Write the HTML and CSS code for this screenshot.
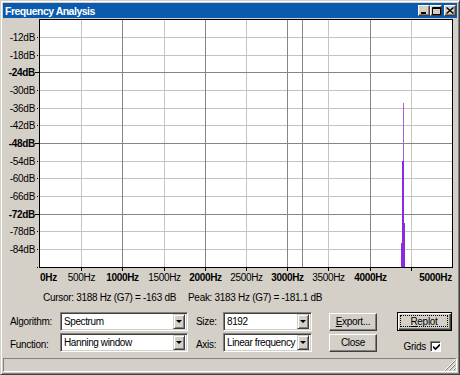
FILE: index.html
```html
<!DOCTYPE html>
<html lang="en">
<head>
    <meta charset="UTF-8">
    <title>Frequency Analysis</title>
    <link rel="stylesheet" href="styles.css">
</head>
<body>
    <div class="window">
        <!-- Barra de titulo -->
        <div class="titlebar">
            <span class="title">Frequency Analysis</span>
            <div class="tb-buttons">
                <span class="tb-btn"><svg width="8" height="7"><rect x="1" y="5" width="5" height="2" fill="#000"/></svg></span>
                <span class="tb-btn"><svg width="9" height="8"><path d="M0.5 0.5H8.5V7.5H0.5Z" fill="none" stroke="#000"/><rect x="0" y="1" width="9" height="1" fill="#000"/></svg></span>
                <span class="tb-btn close"><svg width="8" height="7"><path d="M0.5 0.5L7.5 6.5M7.5 0.5L0.5 6.5" stroke="#000" stroke-width="1.4"/></svg></span>
            </div>
        </div>

        <!-- Grafico -->
        <svg class="plot" width="454" height="270" viewBox="3 18 454 270">
            <rect x="39.5" y="19.5" width="413" height="248" fill="#fff"/>
            <path class="minor" d="M40 37.5H452M40 55.5H452M40 90.5H452M40 108.5H452M40 125.5H452M40 161.5H452M40 178.5H452M40 196.5H452M40 231.5H452M40 249.5H452"/>
            <path class="minor" d="M81.5 20V267M164.5 20V267M246.5 20V267M328.5 20V267M411.5 20V267"/>
            <path class="major" d="M40 72.5H452M40 143.5H452M40 214.5H452"/>
            <path class="major" d="M122.5 20V267M205.5 20V267M287.5 20V267M370.5 20V267M302.5 20V267"/>
            <rect x="403" y="103" width="1" height="164" fill="#a55fe0"/>
            <rect x="402" y="161" width="2" height="106" fill="#8a2be2"/>
            <rect x="403" y="223" width="2" height="44" fill="#8a2be2"/>
            <rect x="401" y="243" width="3" height="24" fill="#8a2be2"/>
            <rect x="39.5" y="19.5" width="413" height="248" fill="none" stroke="#000"/>

            <path class="tick" d="M37 37.5H38M37 55.5H38M37 90.5H38M37 108.5H38M37 125.5H38M37 161.5H38M37 178.5H38M37 196.5H38M37 231.5H38M37 249.5H38M37 267.5H38"/>
            <path class="tick" d="M35 72.5H39M35 143.5H39M35 214.5H39"/>
            <path class="tick" d="M81.5 268V271M122.5 268V271M164.5 268V271M205.5 268V271M246.5 268V271M287.5 268V271M328.5 268V271M370.5 268V271M411.5 268V271"/>

            <text x="35" y="40.6" class="yl">-12dB</text>
            <text x="35" y="58.6" class="yl">-18dB</text>
            <text x="35" y="75.6" class="yl b">-24dB</text>
            <text x="35" y="93.6" class="yl">-30dB</text>
            <text x="35" y="111.6" class="yl">-36dB</text>
            <text x="35" y="128.6" class="yl">-42dB</text>
            <text x="35" y="146.6" class="yl b">-48dB</text>
            <text x="35" y="164.6" class="yl">-54dB</text>
            <text x="35" y="181.6" class="yl">-60dB</text>
            <text x="35" y="199.6" class="yl">-66dB</text>
            <text x="35" y="217.6" class="yl b">-72dB</text>
            <text x="35" y="234.6" class="yl">-78dB</text>
            <text x="35" y="252.6" class="yl">-84dB</text>

            <text x="40" y="281" class="b">0Hz</text>
            <text x="81.5" y="281" class="xl">500Hz</text>
            <text x="122.5" y="281" class="xl b">1000Hz</text>
            <text x="164.5" y="281" class="xl">1500Hz</text>
            <text x="205.5" y="281" class="xl b">2000Hz</text>
            <text x="246.5" y="281" class="xl">2500Hz</text>
            <text x="287.5" y="281" class="xl b">3000Hz</text>
            <text x="328.5" y="281" class="xl">3500Hz</text>
            <text x="370.5" y="281" class="xl b">4000Hz</text>
            <text x="452" y="281" class="yl b">5000Hz</text>
        </svg>

        <div class="info">
            <span class="cursor">Cursor: 3188 Hz (G7) = -163 dB</span>
            <span>Peak: 3183 Hz (G7) = -181.1 dB</span>
        </div>

        <!-- Controles -->
        <div class="controls">
            <span class="lbl">Algorithm:</span>
            <div class="combo"><span class="val">Spectrum</span><i class="drop"></i></div>
            <span class="lbl lbl2">Size:</span>
            <div class="combo"><span class="val">8192</span><i class="drop"></i></div>
            <button class="btn"><u>E</u>xport...</button>
            <button class="btn default"><span class="focus"><u>R</u>eplot</span></button>

            <span class="lbl low">Function:</span>
            <div class="combo"><span class="val">Hanning window</span><i class="drop"></i></div>
            <span class="lbl lbl2 low">Axis:</span>
            <div class="combo"><span class="val">Linear frequency</span><i class="drop"></i></div>
            <button class="btn">Close</button>
            <div class="grids">
                <span>Grids</span>
                <span class="check"><svg width="7" height="7"><path d="M0 2.5L2.5 5L7 0.5" fill="none" stroke="#000" stroke-width="1.6"/></svg></span>
            </div>
        </div>

        <div class="status">
            <svg class="grip" width="12" height="12"><path d="M11.5 1.5L1.5 11.5M11.5 5.5L5.5 11.5M11.5 9.5L9.5 11.5" stroke="#808080"/><path d="M11.5 0.5L0.5 11.5M11.5 4.5L4.5 11.5M11.5 8.5L8.5 11.5" stroke="#fff"/></svg>
        </div>
    </div>
</body>
</html>
```

FILE: styles.css
```css
* {
    box-sizing: border-box;
}
body {
    margin: 0;
    background: #d4d0c8;
    font-family: "Liberation Sans", Arial, sans-serif;
    font-size: 10px;
    letter-spacing: -0.3px;
    color: #000;
}
.window {
    width: 460px;
    height: 375px;
    border: 1px solid;
    border-color: #d4d0c8 #404040 #404040 #d4d0c8;
    box-shadow: inset 1px 1px #fff, inset -1px -1px #808080;
    padding: 2px;
    display: flex;
    flex-direction: column;
}
.titlebar {
    height: 15px;
    background: #0a5aae;
    display: flex;
    align-items: center;
    justify-content: space-between;
    padding: 0 1px 0 2px;
}
.title {
    color: #fff;
    font-weight: bold;
    font-size: 10.5px;
    letter-spacing: -0.5px;
}
.tb-buttons {
    display: flex;
}
.tb-btn {
    width: 12px;
    height: 11px;
    background: #d4d0c8;
    border: 1px solid;
    border-color: #fff #404040 #404040 #fff;
    box-shadow: inset -1px -1px #808080;
    display: flex;
    align-items: center;
    justify-content: center;
}
.tb-btn svg {
    display: block;
}
.tb-btn.close {
    margin-left: 2px;
}
.plot {
    display: block;
    flex: none;
}
.plot path {
    shape-rendering: crispEdges;
    fill: none;
}
.plot .minor {
    stroke: #c4c4c4;
}
.plot .major {
    stroke: #868686;
}
.plot .tick {
    stroke: #000;
}
.plot text {
    font-family: "Liberation Sans", Arial, sans-serif;
    font-size: 10px;
    letter-spacing: -0.3px;
    fill: #000;
}
.plot .b {
    font-weight: bold;
}
.plot .yl {
    text-anchor: end;
}
.plot .xl {
    text-anchor: middle;
}
.info {
    height: 19px;
    display: flex;
    align-items: center;
    padding-left: 40px;
}
.info .cursor {
    width: 145px;
}
.controls {
    margin-top: 5px;
    display: grid;
    grid-template-columns: 50px 128px 35px 89px 65px 75px;
    grid-template-rows: 19px 19px;
    row-gap: 2px;
    padding-left: 7px;
    align-items: center;
}
.lbl2 {
    padding-left: 8px;
}
.low {
    padding-top: 3px;
}
.combo {
    height: 19px;
    background: #fff;
    border: 1px solid;
    border-color: #808080 #fff #fff #808080;
    box-shadow: inset 1px 1px #404040, inset -1px -1px #d4d0c8;
    display: flex;
    align-items: center;
    padding: 2px 2px 2px 3px;
}
.val {
    flex: 1;
    min-width: 0;
    overflow: hidden;
    white-space: nowrap;
    letter-spacing: -0.4px;
}
.drop {
    flex: none;
    width: 12px;
    height: 15px;
    background: #d4d0c8;
    border: 1px solid;
    border-color: #d4d0c8 #404040 #404040 #d4d0c8;
    box-shadow: inset 1px 1px #fff, inset -1px -1px #808080;
    position: relative;
}
.drop::after {
    content: "";
    position: absolute;
    left: 2px;
    top: 5px;
    border-left: 3px solid transparent;
    border-right: 3px solid transparent;
    border-top: 3px solid #000;
}
.btn {
    justify-self: end;
    width: 48px;
    height: 18px;
    padding: 0;
    font: inherit;
    letter-spacing: -0.3px;
    color: #000;
    background: #d4d0c8;
    border: 1px solid;
    border-color: #fff #404040 #404040 #fff;
    box-shadow: inset -1px -1px #808080;
}
.btn.default {
    width: 55px;
    height: 19px;
    border: 1px solid #000;
    box-shadow: inset 1px 1px #fff, inset -1px -1px #404040, inset -2px -2px #808080;
    padding: 2px 3px 3px 2px;
}
.focus {
    display: flex;
    align-items: center;
    justify-content: center;
    height: 100%;
    border: 1px dotted #000;
}
.grids {
    justify-self: end;
    align-self: end;
    margin-right: 11px;
    display: flex;
    align-items: flex-end;
    gap: 4px;
}
.check {
    width: 11px;
    height: 11px;
    background: #fff;
    border: 1px solid;
    border-color: #808080 #fff #fff #808080;
    box-shadow: inset 1px 1px #404040;
    display: flex;
    align-items: center;
    justify-content: center;
}
.check svg {
    display: block;
    margin: 1px 0 0 1px;
}
.status {
    margin-top: 6px;
    height: 14px;
    border: 1px solid;
    border-color: #808080 #fff #fff #808080;
    display: flex;
    justify-content: flex-end;
    align-items: flex-end;
}
.grip {
    display: block;
}
```
